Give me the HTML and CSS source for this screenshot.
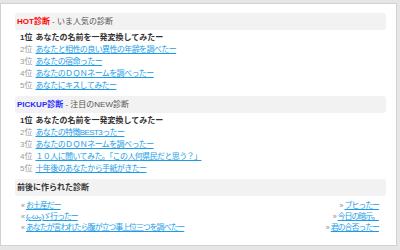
FILE: index.html
```html
<!DOCTYPE html>
<html lang="ja">
<head>
    <meta charset="UTF-8">
    <title>診断</title>
    <link rel="stylesheet" href="styles.css">
</head>
<body>
    <div class="panel">
        <div class="section">
            <div class="bar"><span class="hot">HOT診断</span> - いま人気の診断</div>
            <ul class="rank-list">
                <li class="top"><span class="rank">1位</span>あなたの名前を一発変換してみたー</li>
                <li><span class="rank">2位</span><a href="#">あなたと相性の良い異性の年齢を調べたー</a></li>
                <li><span class="rank">3位</span><a href="#">あなたの宿命ったー</a></li>
                <li><span class="rank">4位</span><a href="#">あなたのＤＱＮネームを調べったー</a></li>
                <li><span class="rank">5位</span><a href="#">あなたにキスしてみたー</a></li>
            </ul>
        </div>

        <div class="section">
            <div class="bar"><span class="pickup">PICKUP診断</span> - 注目のNEW診断</div>
            <ul class="rank-list">
                <li class="top"><span class="rank">1位</span>あなたの名前を一発変換してみたー</li>
                <li><span class="rank">2位</span><a href="#">あなたの特徴BEST3ったー</a></li>
                <li><span class="rank">3位</span><a href="#">あなたのＤＱＮネームを調べったー</a></li>
                <li><span class="rank">4位</span><a href="#">１０人に聞いてみた。「この人何県民だと思う？」</a></li>
                <li><span class="rank">5位</span><a href="#">十年後のあなたから手紙がきたー</a></li>
            </ul>
        </div>

        <div class="section">
            <div class="bar strong">前後に作られた診断</div>
            <div class="near">
                <ul class="near-prev">
                    <li><span class="arrow">«</span><a href="#">お土産だー</a></li>
                    <li><span class="arrow">«</span><a href="#">(｡-ω-｡)ゞ行ったー</a></li>
                    <li><span class="arrow">«</span><a href="#">あなたが言われたら腹が立つ事上位三つを調べたー</a></li>
                </ul>
                <ul class="near-next">
                    <li><span class="arrow">»</span><a href="#">ブヒったー</a></li>
                    <li><span class="arrow">»</span><a href="#">今日の暗示。</a></li>
                    <li><span class="arrow">»</span><a href="#">君の合否ったー</a></li>
                </ul>
            </div>
        </div>
    </div>
</body>
</html>
```

FILE: styles.css
```css
body {
    margin: 0;
    padding: 3px 3px 0 0;
    background-color: #e6e6e6;
    font-family: "Liberation Sans", "Noto Sans CJK JP", sans-serif;
    font-size: 8px;
    color: #333;
}

.panel {
    background-color: #fff;
    border: 1px solid #d2d2d2;
    height: 224px;
    padding: 9px 10px 8px 14px;
}

.section {
    margin-bottom: 4px;
}

.bar {
    background-color: #f2f2f2;
    border-radius: 3px;
    height: 17px;
    line-height: 17px;
    padding-left: 2px;
    color: #555;
}

.bar.strong {
    font-weight: bold;
    color: #333;
}

.hot {
    color: #f00;
    font-weight: bold;
}

.pickup {
    color: #2b2bff;
    font-weight: bold;
}

ul {
    list-style: none;
    margin: 0;
    padding: 0;
}

.rank-list {
    margin-top: 2px;
    padding-left: 5px;
}

.rank-list li {
    line-height: 12px;
    white-space: nowrap;
}

.rank-list a {
    letter-spacing: -0.6px;
}

.rank {
    color: #999;
    margin-right: 3px;
}

.rank-list .top {
    font-weight: bold;
    color: #333;
}

.rank-list .top .rank {
    color: #333;
}

a {
    color: #1a9de6;
    text-decoration: underline;
}

.near {
    display: flex;
    justify-content: space-between;
    margin-top: 4px;
    padding: 0 7px 0 6px;
}

.near li {
    line-height: 11px;
    white-space: nowrap;
}

.near a {
    letter-spacing: -1.1px;
}

.near-next {
    text-align: right;
}

.arrow {
    color: #888;
    font-size: 7px;
    margin-right: 1px;
}
```
